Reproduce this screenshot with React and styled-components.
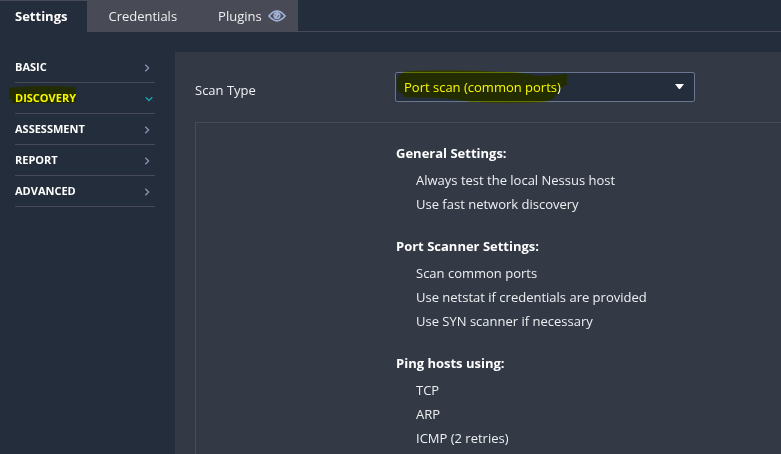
import React, { useState } from "react";
import styled, { createGlobalStyle } from "styled-components";

const GlobalStyle = createGlobalStyle`
  * { box-sizing: border-box; }
  html, body, #root { height: 100%; }
  body {
    margin: 0;
    background: #242d3b;
    color: #fff;
    font: 13px/24px "Open Sans", "Noto Sans", sans-serif;
  }
  button, select { font: inherit; color: inherit; }
`;

const Page = styled.div`
  display: flex;
  flex-direction: column;
  min-height: 100%;
`;

const TabBar = styled.nav`
  display: flex;
  height: 32px;
  border-bottom: 1px solid #484b55;
`;

const Tab = styled.button`
  display: flex;
  align-items: center;
  gap: 6px;
  height: 32px;
  padding: 0 ${(p) => (p.$active ? 20 : p.$last ? 12 : 20)}px 2px ${(p) => (p.$active ? 15 : 21)}px;
  border: 0;
  border-top: 1px solid #484b55;
  background: ${(p) => (p.$active ? "#242d3b" : "#484b55")};
  color: ${(p) => (p.$active ? "#fff" : "#eeeff1")};
  font-weight: ${(p) => (p.$active ? 700 : 400)};
`;

const Body = styled.div`
  display: flex;
  flex: 1;
  padding-top: 20px;
`;

const Sidebar = styled.aside`
  flex: none;
  width: 175px;
  padding: 0 20px 0 15px;
`;

const SideItem = styled.button`
  display: flex;
  align-items: center;
  justify-content: space-between;
  width: 100%;
  height: 31px;
  padding: 0 ${(p) => (p.$open ? 2 : 5)}px 0 0;
  border: 0;
  border-bottom: 1px solid #484b55;
  background: none;
  text-align: left;
  font-size: 11px;
  font-weight: 700;
`;

const Marked = styled.span`
  position: relative;
`;

const MarkerStroke = styled.svg`
  position: absolute;
  left: ${(p) => p.$left}px;
  top: ${(p) => p.$top}px;
  fill: #f8f800;
  mix-blend-mode: multiply;
  pointer-events: none;
`;

const ChevronIcon = styled.svg`
  flex: none;
  fill: none;
  stroke: ${(p) => (p.$open ? "#1fa3b3" : "#8794b5")};
  stroke-width: 1.3;
`;

const Panel = styled.main`
  display: flex;
  flex-direction: column;
  flex: 1;
  min-width: 0;
  padding: 20px 0 0 20px;
  background: #333a46;
`;

const Field = styled.div`
  display: flex;
  align-items: center;
  height: 30px;
`;

const FieldLabel = styled.label`
  flex: none;
  width: 200px;
  padding-top: 6px;
  color: #eeeff1;
`;

const SelectBox = styled.div`
  position: relative;
  flex: 0 1 300px;
  height: 30px;
`;

const Select = styled.select`
  appearance: none;
  width: 100%;
  height: 30px;
  padding: 0 28px 0 8px;
  border: 1px solid #68778d;
  border-radius: 2px;
  background: #242d3b;
`;

const Caret = styled.svg`
  position: absolute;
  right: 10px;
  top: 12px;
  fill: #fff;
  pointer-events: none;
`;

const Summary = styled.section`
  display: flex;
  flex-direction: column;
  flex: 1;
  gap: 18px;
  margin-top: 20px;
  padding: 18px 0 0 200px;
  border: 1px solid #484b57;
  border-width: 1px 0 0 1px;
`;

const GroupTitle = styled.h2`
  margin: 0 0 3px;
  font-size: 13px;
  line-height: 24px;
  font-weight: 700;
`;

const List = styled.ul`
  margin: 0;
  padding: 0 0 0 20px;
  list-style: none;
  color: #eeeff1;
`;

const Eye = () => (
  <svg width="18" height="12" viewBox="0 0 18 12" fill="none" stroke="#a0afd3" aria-hidden="true">
    <path d="M1 6Q5 1.2 9 1.2T17 6Q13 10.8 9 10.8T1 6Z" strokeWidth="1.8" />
    <circle cx="9" cy="5.6" r="3.7" fill="#a0afd3" stroke="none" />
    <path d="M7.2 5.6V4.6M10.8 5Q10.8 7 9 7.2" stroke="#5b6072" strokeWidth="1" />
  </svg>
);

const Chevron = ({ open }) =>
  open ? (
    <ChevronIcon $open width="8" height="7" viewBox="0 0 8 7" aria-hidden="true">
      <path d="M.7 2.2 4 5.5 7.3 2.2" />
    </ChevronIcon>
  ) : (
    <ChevronIcon width="6" height="10" viewBox="0 0 6 10" aria-hidden="true">
      <path d="M1.3 2.7 4.6 6 1.3 9.3" />
    </ChevronIcon>
  );

const sections = ["BASIC", "DISCOVERY", "ASSESSMENT", "REPORT", "ADVANCED"];

const groups = [
  { title: "General Settings:", items: ["Always test the local Nessus host", "Use fast network discovery"] },
  {
    title: "Port Scanner Settings:",
    items: ["Scan common ports", "Use netstat if credentials are provided", "Use SYN scanner if necessary"],
  },
  { title: "Ping hosts using:", items: ["TCP", "ARP", "ICMP (2 retries)"] },
];

export default function App() {
  const [section, setSection] = useState("DISCOVERY");
  return (
    <Page>
      <GlobalStyle />
      <TabBar>
        <Tab type="button" $active>Settings</Tab>
        <Tab type="button">Credentials</Tab>
        <Tab type="button" $last>Plugins <Eye /></Tab>
      </TabBar>
      <Body>
        <Sidebar>
          {sections.map((name) => (
            <SideItem key={name} type="button" $open={name === section} onClick={() => setSection(name)}>
              <Marked>
                {name}
                {name === "DISCOVERY" && (
                  <MarkerStroke $left={-6} $top={0} width="68" height="18" viewBox="0 0 68 18" aria-hidden="true">
                    <path d="M0 2 8 1Q38-1 65 1Q67 1 67 3V15Q66 17 60 17H3V13H0Z" />
                  </MarkerStroke>
                )}
              </Marked>
              <Chevron open={name === section} />
            </SideItem>
          ))}
        </Sidebar>
        <Panel>
          <Field>
            <FieldLabel htmlFor="scan-type">Scan Type</FieldLabel>
            <SelectBox>
              <Select id="scan-type" defaultValue="common">
                <option value="common">Port scan (common ports)</option>
                <option value="all">Port scan (all ports)</option>
                <option value="custom">Custom</option>
              </Select>
              <Caret width="10" height="6" viewBox="0 0 10 6" aria-hidden="true">
                <path d="M0 0H9L5 5H4Z" />
              </Caret>
              <MarkerStroke $left={2} $top={-2} width="172" height="34" viewBox="0 0 172 34" aria-hidden="true">
                <path d="M0 12Q1 3 10 1Q60-1 108 2Q125 2 139 6Q154 6 170 4V15Q164 17 163 19Q159 31 146 32Q110 34 75 32L46 28 6 27V24Q0 22 0 18Z" />
              </MarkerStroke>
            </SelectBox>
          </Field>
          <Summary>
            {groups.map((g) => (
              <div key={g.title}>
                <GroupTitle>{g.title}</GroupTitle>
                <List>
                  {g.items.map((item) => (
                    <li key={item}>{item}</li>
                  ))}
                </List>
              </div>
            ))}
          </Summary>
        </Panel>
      </Body>
    </Page>
  );
}
